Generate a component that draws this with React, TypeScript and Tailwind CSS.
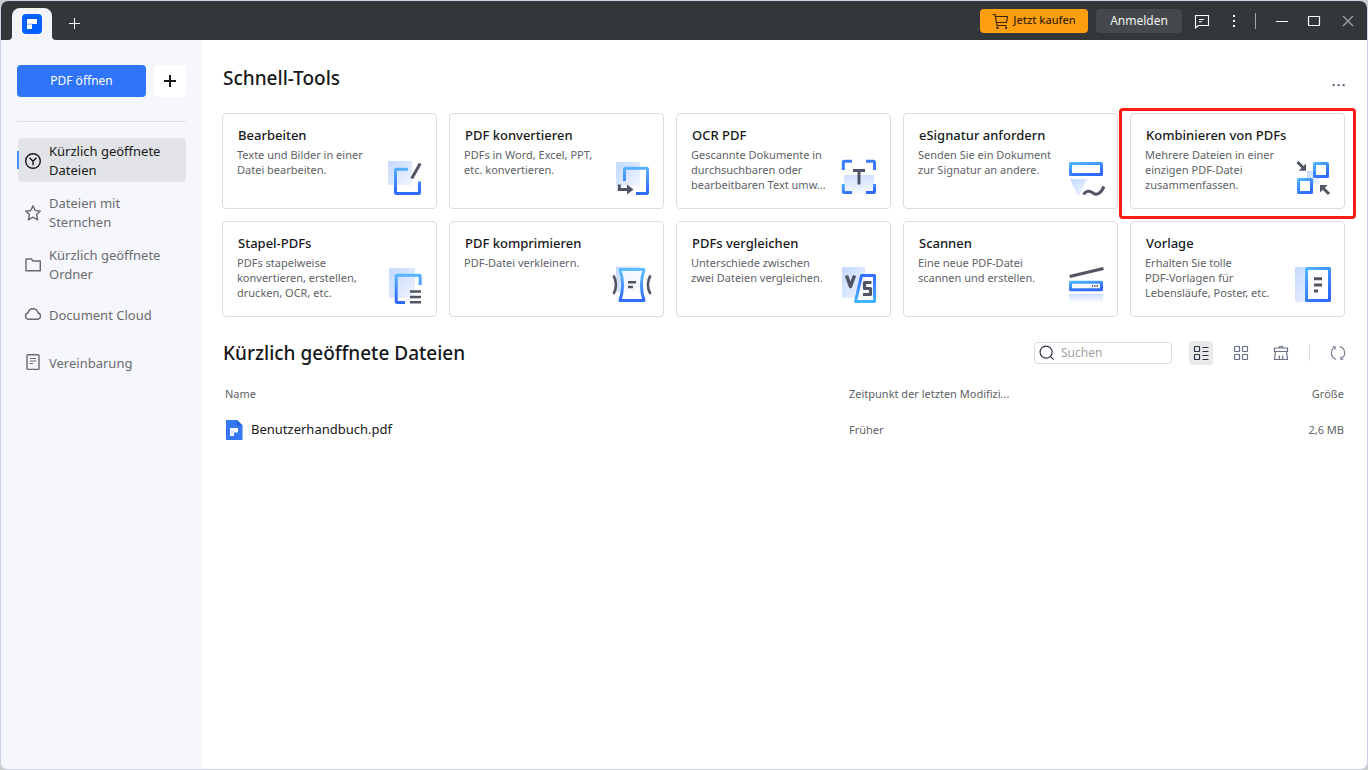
import type { ReactNode } from "react";

const INK = "#505465";

function Shape({ children }: { children: ReactNode }) {
  return (
    <svg viewBox="0 0 40 40" className="size-10 shrink-0" fill="none" strokeWidth="3" strokeLinejoin="round" aria-hidden="true">
      {children}
    </svg>
  );
}

function Gradients() {
  return (
    <svg className="absolute size-0" aria-hidden="true">
      <defs>
        <linearGradient id="down" gradientUnits="userSpaceOnUse" x1="0" y1="4" x2="0" y2="38">
          <stop offset="0.1" stopColor="#5cbcff" />
          <stop offset="0.9" stopColor="#306bff" />
        </linearGradient>
        <linearGradient id="up" gradientUnits="userSpaceOnUse" x1="0" y1="10" x2="0" y2="38">
          <stop offset="0.1" stopColor="#3470ff" />
          <stop offset="1" stopColor="#43b8ff" />
        </linearGradient>
        <linearGradient id="box" x1="0" y1="0" x2="0.6" y2="1">
          <stop offset="0" stopColor="#4cb5ff" />
          <stop offset="1" stopColor="#3069ff" />
        </linearGradient>
        <linearGradient id="pale" x1="0" y1="0" x2="1" y2="1">
          <stop offset="0" stopColor="#c3d8ff" />
          <stop offset="1" stopColor="#f1f5ff" />
        </linearGradient>
        <linearGradient id="paleDown" x1="0" y1="0" x2="0" y2="1">
          <stop offset="0" stopColor="#cfdfff" />
          <stop offset="1" stopColor="#f8faff" />
        </linearGradient>
      </defs>
    </svg>
  );
}

type Tool = { title: string; text: string; icon: ReactNode; marked?: boolean };

const tools: Tool[] = [
  {
    title: "Bearbeiten",
    text: "Texte und Bilder in einer\nDatei bearbeiten.",
    icon: (
      <Shape>
        <rect x="3" y="4" width="24" height="24" rx="1" fill="url(#pale)" />
        <path d="M23 12.3H11.5a1 1 0 0 0-1 1V35.500a1 1 0 0 0 1 1H33.500a1 1 0 0 0 1-1V24.500" stroke="url(#down)" />
        <path d="M26.700 21.500L35.200 6.500" stroke={INK} />
      </Shape>
    ),
  },
  {
    title: "PDF konvertieren",
    text: "PDFs in Word, Excel, PPT,\netc. konvertieren.",
    icon: (
      <Shape>
        <rect x="4" y="5" width="24" height="24" rx="1" fill="url(#pale)" />
        <path d="M12.500 24V12.200a1 1 0 0 1 1-1H34.500a1 1 0 0 1 1 1V35.500a1 1 0 0 1-1 1H24" stroke="url(#down)" />
        <path d="M7.300 27.500V32.500H17" stroke={INK} strokeLinejoin="miter" />
        <path d="M15 27.500l6.500 5-6.500 5z" fill={INK} />
      </Shape>
    ),
  },
  {
    title: "OCR PDF",
    text: "Gescannte Dokumente in\ndurchsuchbaren oder\nbearbeitbaren Text umw...",
    icon: (
      <Shape>
        <rect x="5" y="18" width="30" height="19" fill="url(#paleDown)" />
        <path d="M4.300 13V5.300a1 1 0 0 1 1-1H13M27 4.300h7.500a1 1 0 0 1 1 1V13" stroke="#3a7bff" />
        <path d="M4.300 27v7.500a1 1 0 0 0 1 1H13M27 35.500h7.500a1 1 0 0 0 1-1V27" stroke="url(#box)" />
        <path d="M14 13.500H26M20 13.500V27.500" stroke={INK} />
      </Shape>
    ),
  },
  {
    title: "eSignatur anfordern",
    text: "Senden Sie ein Dokument\nzur Signatur an andere.",
    icon: (
      <Shape>
        <path d="M4 22H21L14 37q-1.500 2-3 0z" fill="url(#pale)" />
        <rect x="4.500" y="6.500" width="31" height="11" stroke="url(#box)" />
        <path d="M17.500 37.500C20 33.500 23.500 33.500 27 36C31 39 35 36 38 29.500" stroke={INK} />
      </Shape>
    ),
  },
  {
    title: "Kombinieren von PDFs",
    text: "Mehrere Dateien in einer\neinzigen PDF-Datei\nzusammenfassen.",
    marked: true,
    icon: (
      <Shape>
        <rect x="14" y="14" width="12" height="13" fill="url(#pale)" />
        <rect x="21.500" y="6.500" width="13" height="13" fill="#fff" fillOpacity="0.7" stroke="url(#box)" />
        <rect x="5.500" y="22.500" width="13" height="13" fill="#fff" fillOpacity="0.7" stroke="url(#box)" />
        <path d="M4.500 5L10 10.500M36 37L30.500 31.500" stroke={INK} />
        <path d="M13 6.500V13.700H5.800zM27 35.500V28H34.500z" fill={INK} />
      </Shape>
    ),
  },
  {
    title: "Stapel-PDFs",
    text: "PDFs stapelweise\nkonvertieren, erstellen,\ndrucken, OCR, etc.",
    icon: (
      <Shape>
        <rect x="4" y="3" width="26" height="30" rx="1" fill="url(#pale)" />
        <path d="M35.200 20V11.200a1 1 0 0 0-1-1H12.200a1 1 0 0 0-1 1V36.500a1 1 0 0 0 1 1H20" stroke="url(#down)" />
        <path d="M25 26.500H36M25 32H36M25 37.300H36" stroke={INK} strokeWidth="2.600" />
      </Shape>
    ),
  },
  {
    title: "PDF komprimieren",
    text: "PDF-Datei verkleinern.",
    icon: (
      <Shape>
        <rect x="4" y="1.500" width="24" height="26" fill="url(#pale)" />
        <path d="M8 4.500H32C28.500 15 28.500 25 32 35.500H8C11.500 25 11.500 15 8 4.500Z" fill="#fff" fillOpacity="0.700" stroke="url(#down)" />
        <path d="M1.500 10.500C4.800 16 4.800 23.500 1.500 29M38.500 10.500C35 16 35 23.500 38.500 29" stroke={INK} strokeWidth="2.600" />
        <path d="M16 17.300H24M16 22H21" stroke={INK} strokeWidth="2.600" />
      </Shape>
    ),
  },
  {
    title: "PDFs vergleichen",
    text: "Unterschiede zwischen\nzwei Dateien vergleichen.",
    icon: (
      <Shape>
        <rect x="3" y="2" width="23" height="31" rx="1" fill="url(#pale)" />
        <path d="M22.500 10.500H35.500V36.500H16.500Z" fill="#fff" fillOpacity="0.600" stroke="url(#up)" />
        <path d="M7.500 10.500L11.500 21.500L15.500 10.500" stroke={INK} strokeWidth="3.500" />
        <path d="M32.500 17.500H25.500V23.500H31.500V29.500H24" stroke={INK} strokeWidth="3.200" />
      </Shape>
    ),
  },
  {
    title: "Scannen",
    text: "Eine neue PDF-Datei\nscannen und erstellen.",
    icon: (
      <Shape>
        <rect x="3" y="29" width="34" height="8" fill="url(#paleDown)" />
        <path d="M3.700 11.500L37.500 3.500" stroke={INK} />
        <rect x="4.500" y="17.200" width="31" height="7.500" stroke="url(#box)" />
        <path d="M26 21h1.200M28.300 21h1.200M30.600 21h1.200" stroke={INK} strokeWidth="2" />
      </Shape>
    ),
  },
  {
    title: "Vorlage",
    text: "Erhalten Sie tolle\nPDF-Vorlagen für\nLebensläufe, Poster, etc.",
    icon: (
      <Shape>
        <rect x="2" y="2" width="18" height="35" rx="1" fill="url(#pale)" />
        <rect x="13.500" y="3.500" width="23" height="32" fill="#fff" fillOpacity="0.850" stroke="url(#box)" />
        <path d="M21 13.700H29M21 20H29M21 26H25" stroke={INK} />
      </Shape>
    ),
  },
];

function ToolCard({ title, text, icon, marked }: Tool) {
  return (
    <div className="relative">
      <button
        type="button"
        className="flex h-24 w-full items-end rounded border border-[#dcdcdc] bg-white pb-[11px] pl-[14px] pr-[11px] pt-[11px] text-left"
      >
        <span className="min-w-0 flex-1 self-start">
          <span className="block whitespace-nowrap pl-px text-[13px] font-medium leading-5 text-[#17181a]">{title}</span>
          <span className="mt-0.5 block whitespace-pre text-[11px] leading-[15px] text-[#606266]">{text}</span>
        </span>
        {icon}
      </button>
      {marked && (
        <span className="pointer-events-none absolute -bottom-2.5 -left-[11px] -right-[11px] -top-[5px] rounded-sm border-3 border-[#fa1e14]" />
      )}
    </div>
  );
}

function Line({ className, children, width = 1.4 }: { className: string; children: ReactNode; width?: number }) {
  return (
    <svg viewBox="0 0 18 18" className={className} fill="none" stroke="currentColor" strokeWidth={width} strokeLinejoin="round" aria-hidden="true">
      {children}
    </svg>
  );
}

const nav = [
  {
    label: "Kürzlich geöffnete Dateien",
    active: true,
    icon: (
      <>
        <circle cx="9" cy="9" r="7.300" />
        <path d="M5.500 5.800L9 9.300L12.500 5.800M9 9.300V13.200" />
      </>
    ),
  },
  {
    label: "Dateien mit Sternchen",
    icon: <path d="M9 1.800l2.200 4.700 5.200.6-3.800 3.500 1 5.200L9 13.200l-4.600 2.600 1-5.200L1.600 7.100l5.200-.6z" />,
  },
  {
    label: "Kürzlich geöffnete Ordner",
    icon: <path d="M2 3h5.500l1.500 2h7.300v9.800H2z" />,
  },
  {
    label: "Document Cloud",
    icon: <path d="M4.500 13.300a3.300 3.300 0 0 1-.4-6.500 5 5 0 0 1 9.800 0 3.300 3.300 0 0 1-.4 6.500z" />,
  },
  {
    label: "Vereinbarung",
    icon: (
      <>
        <rect x="3" y="0.800" width="12" height="14.600" rx="0.800" />
        <path d="M6 4.500h6M6 7h6M6 9.500h3" strokeWidth="1.200" />
      </>
    ),
  },
];

function Sidebar() {
  return (
    <aside className="flex w-[201px] shrink-0 flex-col bg-[#f5f7fc] px-4 pt-[25px]">
      <div className="flex gap-2">
        <button type="button" className="h-8 flex-1 rounded bg-[#3074f9] text-xs text-white">
          PDF öffnen
        </button>
        <button type="button" aria-label="Neu" className="flex size-8 items-center justify-center rounded bg-white text-[#17181a]">
          <Line className="size-[18px]" width={2}>
            <path d="M9 3v12M3 9h12" />
          </Line>
        </button>
      </div>
      <hr className="mt-6 border-[#dfe1e6]" />
      <nav className="mt-4 flex flex-col gap-2">
        {nav.map((item) => (
          <a
            key={item.label}
            href="#"
            className={
              item.active
                ? "relative ml-px flex min-h-10 items-center gap-[7px] rounded bg-[#e1e3e6] pb-0.5 pl-1.5 pr-5 pt-1 text-[13px] leading-[19px] text-[#17181a]"
                : "relative ml-px flex min-h-10 items-center gap-[7px] rounded pb-0.5 pl-1.5 pr-5 pt-1 text-[13px] leading-[19px] text-[#6a6b6e]"
            }
          >
            {item.active && <span className="absolute -left-px top-[13px] h-[18px] w-0.5 bg-[#4a8bff]" />}
            <Line className="size-[18px] shrink-0">{item.icon}</Line>
            <span>{item.label}</span>
          </a>
        ))}
      </nav>
    </aside>
  );
}

function TitleBar() {
  return (
    <header className="flex h-[39px] shrink-0 items-center bg-[#33373a] text-white">
      <div className="relative ml-[11px] flex h-8 w-10 items-center justify-center self-end rounded-t-lg bg-[#f2f4f9]">
        <svg viewBox="0 0 48 4" className="absolute -left-1 bottom-0 h-1 w-12" fill="#f2f4f9" aria-hidden="true">
          <path d="M0 4Q4 4 4 0V4zM48 4Q44 4 44 0V4z" />
        </svg>
        <svg viewBox="0 0 20 20" className="size-5" role="img" aria-label="PDFelement">
          <rect width="20" height="20" rx="4" fill="#0061ff" />
          <path d="M5 5H15V10H10V15H5Z" fill="#fff" />
          <path d="M5 9.500H10V11H5Z" fill="#a9c8ff" />
        </svg>
      </div>
      <button type="button" aria-label="Neuer Tab" className="ml-[13px] mt-1 flex size-[18px] items-center justify-center">
        <svg viewBox="0 0 12 12" className="size-3" stroke="currentColor" shapeRendering="crispEdges">
          <path d="M6.500 1v11M1 6.500h11" />
        </svg>
      </button>
      <div className="ml-auto flex items-center">
        <button type="button" className="flex h-6 w-[108px] items-center justify-center gap-1 rounded bg-[#ff9f0f] text-[11px] font-medium text-[#3a2605]">
          <svg viewBox="0 0 17 16" className="h-4 w-[17px]" fill="none" stroke="currentColor" strokeWidth="1.200">
            <path d="M0.500 1.500H3L5 12.500H14.500M3.400 3.500H15.500L14.500 9.500H4.500" />
            <circle cx="5.500" cy="14.800" r="0.600" />
            <circle cx="14" cy="14.800" r="0.600" />
          </svg>
          Jetzt kaufen
        </button>
        <button type="button" className="ml-2 h-6 w-[86px] rounded bg-[#45494c] text-xs text-[#f2f2f2]">
          Anmelden
        </button>
        <button type="button" aria-label="Feedback" className="ml-3">
          <svg viewBox="0 0 16 16" className="size-4" fill="none" stroke="currentColor" strokeWidth="1.100">
            <path d="M1.500 2.500H14.500V12.500H4.500L1.500 14.800Z" />
            <path d="M5 6.500h5M5 8.800h3" />
          </svg>
        </button>
        <button type="button" aria-label="Menü" className="ml-4">
          <svg viewBox="0 0 16 16" className="size-4" fill="currentColor">
            <path d="M7 2h2v2H7zM7 7h2v2H7zM7 12h2v2H7z" />
          </svg>
        </button>
        <span className="ml-[13px] h-4 w-px bg-[#a3a6a8]" />
        <button type="button" aria-label="Minimieren" className="ml-[18px]">
          <svg viewBox="0 0 16 16" className="size-4" fill="none" stroke="currentColor">
            <path d="M2 8.500H14" />
          </svg>
        </button>
        <button type="button" aria-label="Maximieren" className="ml-4">
          <svg viewBox="0 0 16 16" className="size-4" fill="none" stroke="currentColor" strokeWidth="1.200">
            <rect x="2.500" y="3.500" width="11" height="9" rx="0.500" />
          </svg>
        </button>
        <button type="button" aria-label="Schließen" className="ml-[18px] mr-[11px] text-[#a8abad]">
          <svg viewBox="0 0 16 16" className="size-4" fill="none" stroke="currentColor" strokeWidth="1.100">
            <path d="M3 3L13 13M13 3L3 13" />
          </svg>
        </button>
      </div>
    </header>
  );
}

function RecentFiles() {
  return (
    <section>
      <div className="mt-5 flex items-center">
        <h2 className="ml-px text-[19px] font-medium leading-8 text-[#17181a]">Kürzlich geöffnete Dateien</h2>
        <label className="ml-auto flex h-[22px] w-[138px] items-center gap-1.5 rounded border border-[#dcdcdc] pl-1 text-[#2c3146]">
          <Line className="size-4 shrink-0" width={1.3}>
            <circle cx="8" cy="8" r="6.800" />
            <path d="M13 13l3.500 3.500" />
          </Line>
          <input
            type="text"
            aria-label="Suchen"
            placeholder="Suchen"
            className="w-full min-w-0 text-xs outline-none placeholder:text-[#a0a1a3]"
          />
        </label>
        <button type="button" aria-label="Listenansicht" className="ml-[17px] flex size-6 items-center justify-center rounded bg-[#e9e9ea] text-[#2c3146]">
          <svg viewBox="0 0 16 16" className="size-4" fill="none" stroke="currentColor" strokeWidth="1.200">
            <rect x="1.500" y="1.500" width="5" height="5" rx="0.500" />
            <rect x="1.500" y="9.500" width="5" height="5" rx="0.500" />
            <path d="M9.500 2.500h6M9.500 6.500h6M9.500 10.500h6M9.500 14.500h6" />
          </svg>
        </button>
        <button type="button" aria-label="Rasteransicht" className="ml-4 flex size-6 items-center justify-center text-[#6b6f85]">
          <svg viewBox="0 0 16 16" className="size-4" fill="none" stroke="currentColor" strokeWidth="1.200">
            <rect x="1.500" y="1.500" width="5" height="5" rx="0.500" />
            <rect x="9.500" y="1.500" width="5" height="5" rx="0.500" />
            <rect x="1.500" y="9.500" width="5" height="5" rx="0.500" />
            <rect x="9.500" y="9.500" width="5" height="5" rx="0.500" />
          </svg>
        </button>
        <button type="button" aria-label="Liste leeren" className="ml-4 flex size-6 items-center justify-center text-[#6b6f85]">
          <svg viewBox="0 0 16 16" className="size-4" fill="none" stroke="currentColor" strokeWidth="1.200">
            <path d="M6.500 3V1.500h3V3M1.500 6.500V3h13v3.500zM2.500 6.500L1.500 14.500H14.500L13.500 6.500M6.300 14.500V10.500M9.700 14.500V10.500" />
          </svg>
        </button>
        <span className="ml-4 h-4 w-px bg-[#dcdcdc]" />
        <button type="button" aria-label="Aktualisieren" className="-mr-[5px] ml-4 flex size-6 items-center justify-center text-[#7d8194]">
          <svg viewBox="0 0 16 16" className="size-4" fill="none" stroke="currentColor" strokeWidth="1.200">
            <path d="M6.200 14.300A6.500 6.500 0 0 1 5 2.200M9.800 1.700A6.500 6.500 0 0 1 11 13.800" />
            <path d="M2.800 1.500L5.300 2l-.6 2.500M13.200 14.500l-2.500-.5.6-2.500" />
          </svg>
        </button>
      </div>
      <table className="mt-[7px] w-full table-fixed text-[11px] text-[#606266]">
        <thead>
          <tr className="h-9 text-left">
            <th className="pl-[3px] font-normal">Name</th>
            <th className="w-[250px] font-normal">Zeitpunkt der letzten Modifizi...</th>
            <th className="w-[246px] pr-px text-right font-normal">Größe</th>
          </tr>
        </thead>
        <tbody>
          <tr className="h-9">
            <td className="pl-[3px]">
              <a href="#" className="flex items-center gap-2 text-[13px] text-[#17181a]">
                <svg viewBox="0 0 18 20" className="h-5 w-[18px]" aria-hidden="true">
                  <path d="M1 0H12L17.500 5.500V20H1Z" fill="#3478f6" />
                  <path d="M12 0L17.500 5.500H12Z" fill="#2160dc" />
                  <path d="M5 8H13V12.500H9V16H5Z" fill="#fff" />
                  <path d="M5 11.500H9V12.500H5Z" fill="#a9c8ff" />
                </svg>
                Benutzerhandbuch.pdf
              </a>
            </td>
            <td>Früher</td>
            <td className="pr-px text-right">2,6 MB</td>
          </tr>
        </tbody>
      </table>
    </section>
  );
}

export default function App() {
  return (
    <div className="bg-[#c9cccb] font-['Noto_Sans','Open_Sans',sans-serif]">
      <Gradients />
      <div className="flex min-h-screen flex-col overflow-hidden rounded-lg border border-[#cdd2e6] bg-white">
        <TitleBar />
        <div className="flex flex-1">
          <Sidebar />
          <main className="min-w-0 flex-1 pl-5 pr-[22px]">
            <div className="flex h-[73px] items-center">
              <h2 className="ml-px mt-1 text-[19px] font-medium text-[#17181a]">Schnell-Tools</h2>
              <button type="button" aria-label="Mehr" className="ml-auto mt-4">
                <svg viewBox="0 0 14 4" className="h-1 w-3.5" fill="#6b6f85">
                  <path d="M1.500 1h2.200v2.200H1.500zM6.500 1h2.200v2.200H6.500zM11.500 1h2.200v2.200h-2.200z" />
                </svg>
              </button>
            </div>
            <div className="grid grid-cols-5 gap-3">
              {tools.map((tool) => (
                <ToolCard key={tool.title} {...tool} />
              ))}
            </div>
            <RecentFiles />
          </main>
        </div>
      </div>
    </div>
  );
}
